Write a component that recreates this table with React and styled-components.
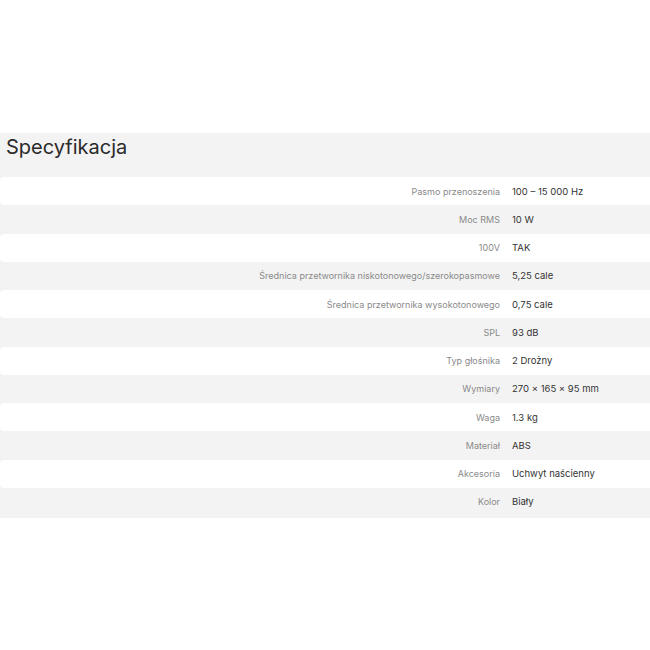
import styled, { createGlobalStyle } from 'styled-components';

const specs = [
  ['Pasmo przenoszenia', '100 – 15 000 Hz'],
  ['Moc RMS', '10 W'],
  ['100V', 'TAK'],
  ['Średnica przetwornika niskotonowego/szerokopasmowe', '5,25 cale'],
  ['Średnica przetwornika wysokotonowego', '0,75 cale'],
  ['SPL', '93 dB'],
  ['Typ głośnika', '2 Drożny'],
  ['Wymiary', '270 × 165 × 95 mm'],
  ['Waga', '1.3 kg'],
  ['Materiał', 'ABS'],
  ['Akcesoria', 'Uchwyt naścienny'],
  ['Kolor', 'Biały'],
];

const GlobalStyle = createGlobalStyle`
  body {
    margin: 0;
    background: #fff;
    font-family: Inter, "Liberation Sans", sans-serif;
  }
`;

const Page = styled.div`
  padding-top: 133px;
  width: 650px;
`;

const Panel = styled.section`
  background: #f3f3f3;
  padding-bottom: 2px;
`;

const Title = styled.h2`
  margin: 0;
  height: 44px;
  padding: 0 0 0 6px;
  box-sizing: border-box;
  font-size: 20px;
  font-weight: 400;
  color: #2a2a2a;
  line-height: 28px;
`;

const Row = styled.div`
  display: grid;
  grid-template-columns: 500px 1fr;
  column-gap: 12px;
  align-items: center;
  height: 28.25px;
  background: ${({ odd }) => (odd ? 'transparent' : '#fff')};
  border-radius: 4px 0 0 4px;
`;

const Label = styled.div`
  text-align: right;
  font-size: 9px;
  color: #8a8a8a;
  white-space: nowrap;
`;

const Value = styled.div`
  font-size: 9.5px;
  color: #333;
  white-space: nowrap;
`;

export default function App() {
  return (
    <Page>
      <GlobalStyle />
      <Panel>
        <Title>Specyfikacja</Title>
        {specs.map(([label, value], i) => (
          <Row key={label} odd={i % 2 === 1}>
            <Label>{label}</Label>
            <Value>{value}</Value>
          </Row>
        ))}
      </Panel>
    </Page>
  );
}
